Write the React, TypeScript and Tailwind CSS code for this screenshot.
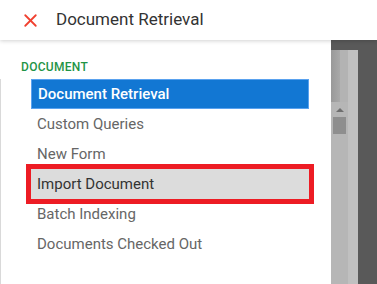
import { X } from "lucide-react";

type MenuItem = {
  label: string;
  state?: "active" | "marked";
};

const items: MenuItem[] = [
  { label: "Document Retrieval", state: "active" },
  { label: "Custom Queries" },
  { label: "New Form" },
  { label: "Import Document", state: "marked" },
  { label: "Batch Indexing" },
  { label: "Documents Checked Out" },
];

const itemClass = (state?: MenuItem["state"]) => {
  if (state === "active")
    return "bg-[#1277d3] border border-[#5aa2ef] text-white font-medium";
  if (state === "marked")
    return "bg-[#dcdcdc] text-[#333333] outline-[5px] outline-solid outline-[#ed1c24]";
  return "text-[#666666]";
};

const App = () => {
  return (
    <div
      className="relative w-[377px] h-[284px] overflow-hidden bg-[#595959]"
      style={{ fontFamily: "Roboto, 'Liberation Sans', sans-serif" }}
    >
      <header className="relative z-10 flex items-center h-10 bg-white shadow-[0_1px_4px_rgba(0,0,0,0.18)]">
        <X className="ml-[20px] w-[21px] h-[21px] text-[#f0402f]" strokeWidth={2.1} />
        <h1 className="ml-[15px] text-[17px] text-[#333333]">Document Retrieval</h1>
      </header>
      <div className="flex h-[244px]">
        <aside className="flex w-[331px] bg-white">
          <div className="w-px mt-[39px] bg-[#d9d9d9]" />
          <div className="flex-1 pt-[19px] pl-[20px]">
            <h2 className="text-[12px] leading-4 font-medium tracking-[0.3px] text-[#1f9446] uppercase">
              Document
            </h2>
            <ul className="mt-[4px] ml-[10px] w-[278px]">
              {items.map((d, i) => (
                <li
                  key={i}
                  className={`flex items-center h-[30px] pl-[6px] text-[15px] ${itemClass(d.state)}`}
                >
                  {d.label}
                </li>
              ))}
            </ul>
          </div>
        </aside>
        <div className="flex-1 flex">
          <div className="relative flex w-[27px] mt-[10px]">
            <div className="w-[9px] bg-gradient-to-r from-[#999999] to-[#a9a9a9]" />
            <div className="w-[8px] bg-[#b3b3b3]" />
            <div className="w-[10px] bg-[#c0c0c0]" />
            <div className="absolute left-0 top-[52px] bottom-0 w-[17px] bg-[#b6b6b6] flex flex-col items-center">
              <span className="mt-[6px] w-0 h-0 border-l-[4px] border-r-[4px] border-b-[4px] border-l-transparent border-r-transparent border-b-[#6e6e6e]" />
              <span className="mt-[5px] w-[13px] h-[17px] bg-[#8e8e8e]" />
            </div>
          </div>
        </div>
      </div>
    </div>
  );
};

export default App;
